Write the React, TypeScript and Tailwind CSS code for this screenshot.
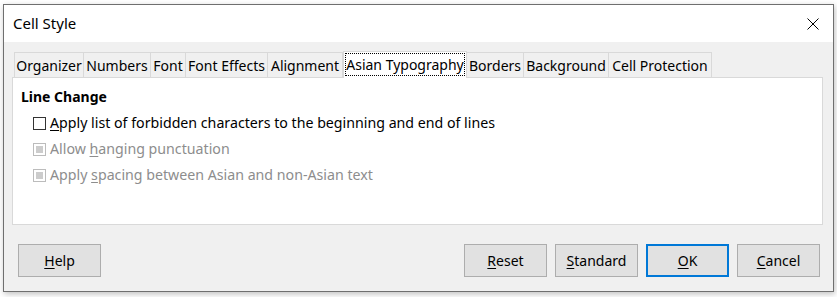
import React from "react";

const font = { fontFamily: '"Noto Sans", "Open Sans", sans-serif' };

function U({ children }: { children: React.ReactNode }) {
  return <span className="underline underline-offset-[2px] decoration-1">{children}</span>;
}

const tabs: { label: string; w: string; active?: boolean }[] = [
  { label: "Organizer", w: "w-[70px]" },
  { label: "Numbers", w: "w-[67px]" },
  { label: "Font", w: "w-[35px]" },
  { label: "Font Effects", w: "w-[82px]" },
  { label: "Alignment", w: "w-[75px]" },
  { label: "Asian Typography", w: "w-[124px]", active: true },
  { label: "Borders", w: "w-[57px]" },
  { label: "Background", w: "w-[85px]" },
  { label: "Cell Protection", w: "w-[103px]" },
];

function Btn({ children, primary }: { children: React.ReactNode; primary?: boolean }) {
  return (
    <div
      className={
        "w-[83px] h-[33px] flex items-center justify-center bg-[#e1e1e1] text-[14px] text-black " +
        (primary ? "border-2 border-[#0078d7]" : "border border-[#adadad]")
      }
    >
      {children}
    </div>
  );
}

export default function App() {
  return (
    <div className="w-[837px] h-[297px] bg-white pt-[4px] pl-[3px]" style={font}>
      <div className="w-[831px] h-[288px] border border-[#6f6f6f] bg-[#f0f0f0] flex flex-col shadow-[1px_2px_6px_rgba(0,0,0,0.25)]">
        {/* title bar */}
        <div className="h-[37px] bg-white flex items-center justify-between pl-[9px] pr-[14px]">
          <span className="text-[15px] text-black">Cell Style</span>
          <svg width="12" height="12" viewBox="0 0 12 12">
            <path d="M0.5 0.5 L11.5 11.5 M11.5 0.5 L0.5 11.5" stroke="#000" strokeWidth="1" />
          </svg>
        </div>
        {/* tabs */}
        <div className="flex items-end pl-[10px] mt-[8px] h-[27px]">
          {tabs.map((t) =>
            t.active ? (
              <div
                key={t.label}
                className={`${t.w} h-[27px] -mb-px relative z-10 bg-white border border-b-0 border-[#d9d9d9] flex items-center justify-center text-[14px] text-black pb-[1px]`}
              >
                <div className="absolute inset-[1px] bottom-[2px] border border-dotted border-black" />
                {t.label}
              </div>
            ) : (
              <div
                key={t.label}
                className={`${t.w} h-[25px] bg-[#f0f0f0] border border-l-0 first:border-l border-b-0 border-[#d9d9d9] flex items-center justify-center text-[14px] text-black`}
              >
                {t.label}
              </div>
            )
          )}
        </div>
        {/* panel */}
        <div className="ml-[8px] mr-[10px] h-[148px] bg-white border border-[#d9d9d9] flex flex-col pl-[8px] pt-[9px]">
          <div className="text-[14px] font-bold text-black leading-[20px]">Line Change</div>
          <div className="flex flex-col pl-[12px] mt-[6px] gap-[6px]">
            <div className="flex items-center gap-[4px] h-[20px]">
              <div className="w-[13px] h-[13px] border border-[#333] bg-white" />
              <span className="text-[14.2px] text-black">
                <U>A</U>pply list of forbidden characters to the beginning and end of lines
              </span>
            </div>
            <div className="flex items-center gap-[4px] h-[20px]">
              <div className="w-[13px] h-[13px] border border-[#bcbcbc] bg-white flex items-center justify-center">
                <div className="w-[7px] h-[7px] bg-[#cccccc]" />
              </div>
              <span className="text-[14.2px] text-[#8d8d8d]">
                Allow <U>h</U>anging punctuation
              </span>
            </div>
            <div className="flex items-center gap-[4px] h-[20px]">
              <div className="w-[13px] h-[13px] border border-[#bcbcbc] bg-white flex items-center justify-center">
                <div className="w-[7px] h-[7px] bg-[#cccccc]" />
              </div>
              <span className="text-[14.2px] text-[#8d8d8d]">
                Apply <U>s</U>pacing between Asian and non-Asian text
              </span>
            </div>
          </div>
        </div>
        {/* buttons */}
        <div className="flex items-center mt-[19px] pl-[14px] pr-[13px]">
          <Btn>
            <U>H</U>elp
          </Btn>
          <div className="flex-1" />
          <div className="flex gap-[8px]">
            <Btn>
              <U>R</U>eset
            </Btn>
            <Btn>
              <U>S</U>tandard
            </Btn>
            <Btn primary>
              <U>O</U>K
            </Btn>
            <Btn>
              <U>C</U>ancel
            </Btn>
          </div>
        </div>
      </div>
    </div>
  );
}
